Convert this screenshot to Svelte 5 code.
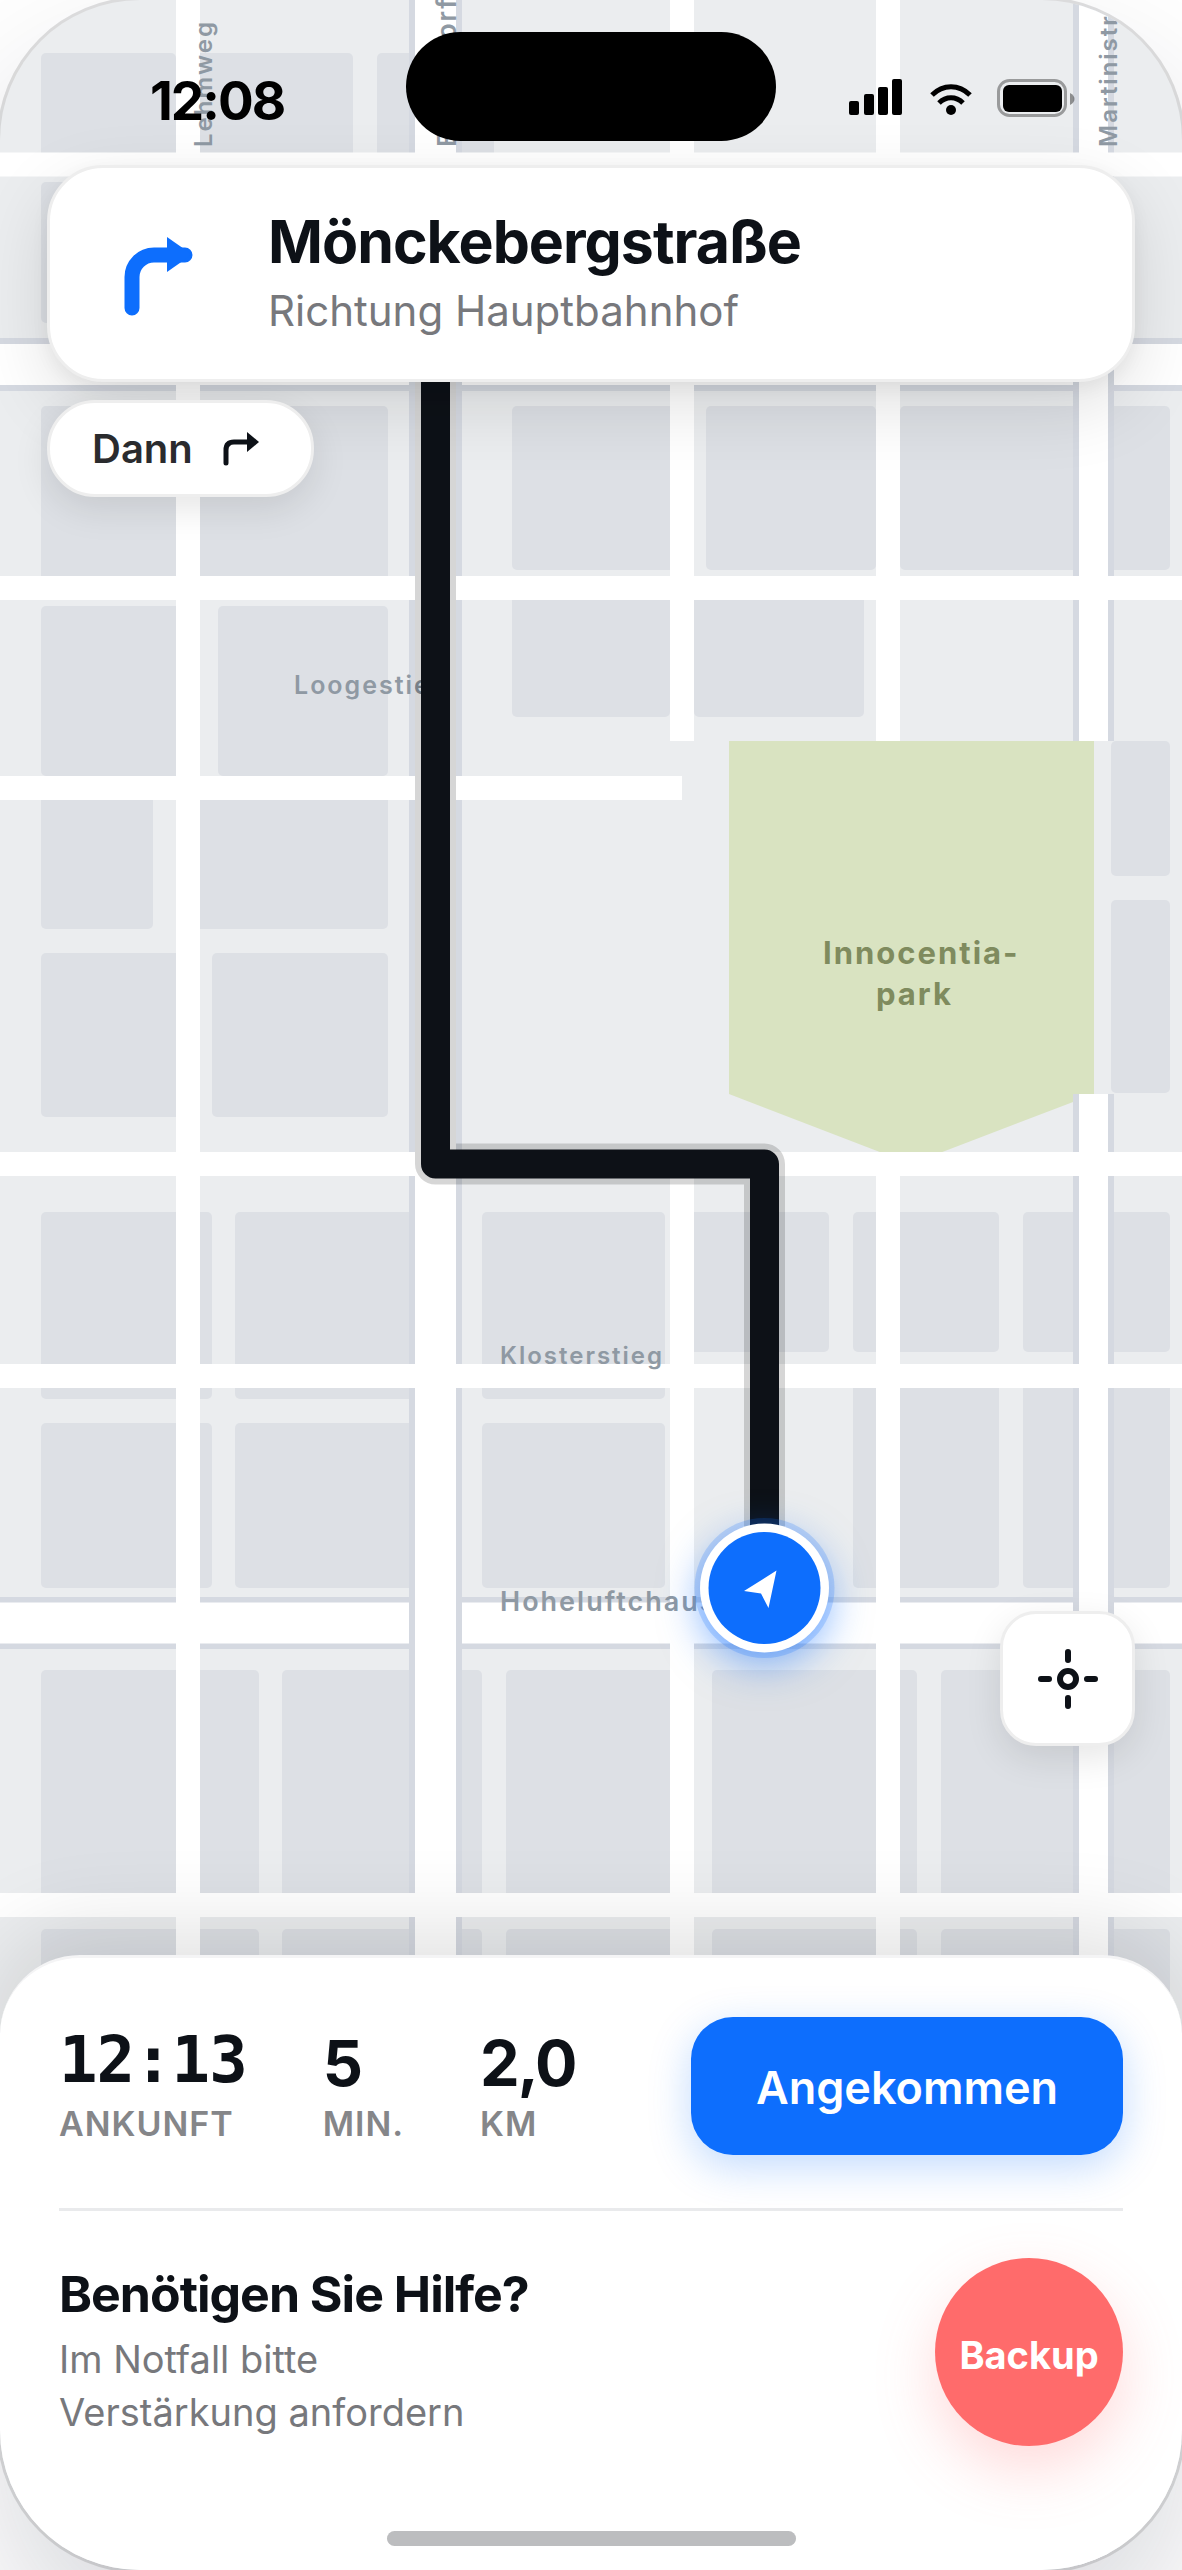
<script>
  const stats = [
    { value: '12:13', label: 'Ankunft', mono: true },
    { value: '5', label: 'Min.' },
    { value: '2,0', label: 'km' }
  ]

  // x, y, width, height
  const blocks = [
    [41, 53, 135, 110], [190, 53, 163, 110], [377, 53, 117, 110],
    [41, 182, 150, 141],
    [41, 406, 150, 180], [190, 406, 198, 180], [512, 406, 170, 164], [706, 406, 170, 164], [900, 406, 270, 164],
    [41, 606, 150, 170], [218, 606, 170, 170], [512, 590, 158, 127], [694, 590, 170, 127],
    [41, 776, 112, 153], [190, 776, 198, 153],
    [41, 953, 150, 164], [212, 953, 176, 164],
    [1111, 741, 59, 135], [1111, 900, 59, 193],
    [41, 1212, 171, 187], [235, 1212, 190, 187], [482, 1212, 183, 187],
    [680, 1212, 149, 140], [853, 1212, 146, 140], [1023, 1212, 147, 140],
    [41, 1423, 171, 165], [235, 1423, 190, 165], [482, 1423, 183, 165],
    [853, 1376, 146, 212], [1023, 1376, 147, 212],
    [41, 1670, 218, 235], [282, 1670, 200, 235], [506, 1670, 176, 235], [712, 1670, 205, 235], [941, 1670, 229, 235],
    [41, 1929, 218, 235], [282, 1929, 200, 235], [506, 1929, 176, 235], [712, 1929, 205, 235], [941, 1929, 229, 235]
  ]

  const mainRoads = [
    { d: 'M0 364.5H1182', width: 41, edge: 53 },
    { d: 'M0 1623H1182', width: 41, edge: 52 },
    { d: 'M435.5 0V2570', width: 41, edge: 53 },
    { d: 'M1093.5 0V741M1093.5 1094V2570', width: 29, edge: 41 }
  ]

  const sideRoads =
    'M0 164.5H1182M0 588H1182M0 788H682M0 1164H1182M0 1376H1182M0 1905H1182' +
    'M188 0V2570M682 0V741M682 1164V2570M888 0V741M888 1164V2570'

  const route = 'M435.5 300V1164H764.5V1588'
</script>

<main class="phone">
  <svg class="map" viewBox="0 0 1182 2570" preserveAspectRatio="xMidYMin slice" role="img" aria-label="Karte">
    {#each blocks as [x, y, width, height]}
      <rect class="block" {x} {y} {width} {height} rx="5" />
    {/each}

    <path class="park" d="M729 741H1094V1094L911 1164L729 1094Z" />

    {#each mainRoads as road}
      <path d={road.d} stroke="#d5d9e1" stroke-width={road.edge} />
      <path d={road.d} stroke="#fff" stroke-width={road.width} />
    {/each}
    <path d={sideRoads} stroke="#fff" stroke-width="24" />

    <g class="street">
      <text x="294" y="694" font-size="25">Loogestieg</text>
      <text x="500" y="1364" font-size="24">Klosterstieg</text>
      <text x="500" y="1611" font-size="27">Hoheluftchaussee</text>
      <text transform="translate(212 147) rotate(-90)" font-size="24">Lehmweg</text>
      <text transform="translate(456 147) rotate(-90)" font-size="26">Eppendorfer Baum</text>
      <text transform="translate(1117 147) rotate(-90)" font-size="24">Martinistraße</text>
    </g>
    <text class="park-name">
      <tspan x="823" y="964">Innocentia-</tspan>
      <tspan x="876" y="1005">park</tspan>
    </text>

    <path class="route-halo" d={route} />
    <path class="route" d={route} />

    <g class="marker">
      <circle class="glow" cx="764.5" cy="1588" r="70" />
      <circle class="rim" cx="764.5" cy="1588" r="64.5" />
      <circle cx="764.5" cy="1588" r="56" fill="#0d6efd" />
      <path d="M744 1591L776.500 1570.500L768.500 1608L761 1593.500Z" fill="#fff" />
    </g>
  </svg>

  <div class="status">
    <time class="clock">12:08</time>
    <div class="island"></div>
    <svg class="signals" viewBox="0 0 226 40" aria-hidden="true">
      <rect x="0" y="22" width="10" height="14" rx="2" />
      <rect x="15" y="15" width="10" height="21" rx="2" />
      <rect x="29" y="8" width="10" height="28" rx="2" />
      <rect x="43" y="0" width="10" height="36" rx="2" />
      <g fill="none" stroke="#000" stroke-width="5">
        <path d="M83 16C94 5 110 5 121 16" />
        <path d="M90 24C97 17 107 17 114 24" />
      </g>
      <circle cx="102" cy="31" r="5" />
      <rect x="149.500" y="1.500" width="67" height="35" rx="11" fill="none" stroke="#000" stroke-opacity="0.350" stroke-width="3" />
      <rect x="154" y="6" width="59" height="27" rx="6" />
      <path d="M221 14C227 17 227 23 221 26Z" fill-opacity="0.400" />
    </svg>
  </div>

  <section class="direction">
    <svg class="turn" viewBox="0 0 70 84" aria-hidden="true">
      <path d="M8 76V45A22 22 0 0 1 30 23H61" fill="none" stroke="#0d6efd" stroke-width="15" stroke-linecap="round" />
      <path d="M43 5L68 22.500L43 40Z" fill="#0d6efd" />
    </svg>
    <div>
      <h1>Mönckebergstraße</h1>
      <p class="towards">Richtung Hauptbahnhof</p>
    </div>
  </section>

  <div class="next">
    <span>Dann</span>
    <svg class="next-turn" viewBox="0 0 36 36" aria-hidden="true">
      <path d="M3 32V19Q3 11 11 11H28" fill="none" stroke="#0d1117" stroke-width="5" stroke-linecap="round" />
      <path d="M24 1L36 11L24 21Z" fill="#0d1117" />
    </svg>
  </div>

  <button class="locate" type="button" aria-label="Position zentrieren">
    <svg viewBox="0 0 60 60" aria-hidden="true">
      <circle cx="30" cy="30" r="8" />
      <path d="M30 3V11M30 49V57M3 30H11M49 30H57" />
    </svg>
  </button>

  <section class="sheet">
    <div class="trip">
      <dl class="stats">
        {#each stats as stat}
          <div class="stat">
            <dt>{stat.label}</dt>
            <dd class:mono={stat.mono}>{stat.value}</dd>
          </div>
        {/each}
      </dl>
      <button class="arrived" type="button">Angekommen</button>
    </div>

    <div class="help">
      <div>
        <h2>Benötigen Sie Hilfe?</h2>
        <p class="hint">Im Notfall bitte<br />Verstärkung anfordern</p>
      </div>
      <button class="backup" type="button">Backup</button>
    </div>

    <div class="home"></div>
  </section>
</main>

<style>
  :global(body) {
    margin: 0;
    background: #fff;
  }

  .phone {
    position: relative;
    display: flex;
    flex-direction: column;
    box-sizing: border-box;
    min-height: 100vh;
    overflow: hidden;
    border-radius: 140px;
    background: #ebedef;
    box-shadow:
      0 0 0 3px rgba(0, 0, 0, 0.12),
      0 72px 150px rgba(16, 24, 48, 0.17);
    font-family: Inter, 'Liberation Sans', sans-serif;
    color: #0d1117;
  }

  .map {
    position: absolute;
    inset: 0;
    width: 100%;
    height: 100%;
    fill: none;
  }

  .block {
    fill: #dde0e5;
  }

  .park {
    fill: #d9e3c1;
  }

  .street {
    fill: #8f99a3;
    font-weight: 600;
    letter-spacing: 2px;
  }

  .park-name {
    fill: #7f8b5e;
    font-size: 31px;
    font-weight: 700;
    letter-spacing: 2px;
  }

  .route,
  .route-halo {
    stroke: #0d1117;
    stroke-width: 29;
    stroke-linejoin: round;
  }

  .route-halo {
    stroke: #000;
    stroke-opacity: 0.16;
    stroke-width: 41;
  }

  .glow {
    fill: #0d6efd;
    fill-opacity: 0.2;
  }

  .rim {
    fill: #fff;
    filter: drop-shadow(0 12px 20px rgba(13, 110, 253, 0.5));
  }

  .status {
    position: relative;
    display: grid;
    grid-template-columns: 1fr 370px 1fr;
    align-items: center;
    height: 109px;
    padding: 32px 0 24px;
  }

  .clock {
    margin: 28px 0 0 150px;
    font-size: 53px;
    font-weight: 700;
    line-height: 52px;
    letter-spacing: -2px;
    color: #000;
  }

  .island {
    height: 109px;
    border-radius: 55px;
    background: #000;
  }

  .signals {
    width: 226px;
    height: 40px;
    margin: 25px 0 0 73px;
  }

  .direction {
    position: relative;
    display: flex;
    align-items: center;
    gap: 74px;
    box-sizing: border-box;
    min-height: 217px;
    margin: 0 47px;
    padding: 0 74px;
    border: 3px solid #eee;
    border-radius: 56px;
    background: #fff;
    box-shadow:
      0 6px 18px rgba(0, 0, 0, 0.05),
      0 24px 72px rgba(0, 0, 0, 0.12);
  }

  .turn {
    flex: none;
    width: 70px;
    height: 84px;
  }

  h1 {
    margin: 0 0 3px;
    font-size: 59px;
    font-weight: 700;
    line-height: 72px;
    letter-spacing: -1px;
  }

  .towards {
    margin: 0;
    font-size: 42px;
    line-height: 60px;
    color: #77787c;
  }

  .next {
    position: relative;
    display: flex;
    align-self: flex-start;
    align-items: center;
    gap: 30px;
    box-sizing: border-box;
    height: 97px;
    margin: 18px 47px 0;
    padding: 0 52px 0 42px;
    border: 3px solid #eee;
    border-radius: 48px;
    background: #fff;
    box-shadow: 0 12px 36px rgba(0, 0, 0, 0.1);
    font-size: 40px;
    font-weight: 600;
    color: #2a2b2e;
  }

  .next-turn {
    width: 36px;
    height: 36px;
  }

  button {
    border: 0;
    font-family: inherit;
    cursor: pointer;
  }

  .locate {
    position: relative;
    display: grid;
    place-items: center;
    box-sizing: border-box;
    width: 135px;
    height: 135px;
    margin: auto 47px 209px auto;
    padding: 0;
    border: 3px solid #eee;
    border-radius: 36px;
    background: #fff;
    box-shadow: 0 12px 36px rgba(0, 0, 0, 0.1);
  }

  .locate svg {
    width: 60px;
    height: 60px;
    fill: none;
    stroke: #0d1117;
    stroke-width: 6;
    stroke-linecap: round;
  }

  .sheet {
    position: relative;
    padding: 59px 59px 24px;
    border-top: 3px solid #f4f4f5;
    border-radius: 80px 80px 0 0;
    background: #fff;
    box-shadow: 0 -24px 90px rgba(0, 0, 0, 0.12);
  }

  .trip {
    display: flex;
    align-items: center;
    justify-content: space-between;
    padding-bottom: 53px;
    border-bottom: 3px solid #e9eaec;
  }

  .stats {
    display: flex;
    gap: 76px;
    margin: 0;
  }

  .stat {
    display: flex;
    flex-direction: column-reverse;
    gap: 18px;
  }

  dt {
    font-size: 34px;
    font-weight: 600;
    line-height: 34px;
    letter-spacing: 1px;
    text-transform: uppercase;
    color: #858689;
  }

  dd {
    margin: 0;
    font-size: 63px;
    font-weight: 700;
    line-height: 52px;
    letter-spacing: -2px;
  }

  .mono {
    font-family: 'DejaVu Sans Mono', monospace;
    font-size: 64px;
    line-height: 58px;
    letter-spacing: -1px;
  }

  .arrived {
    width: 432px;
    height: 138px;
    padding: 2px 0 0;
    border-radius: 42px;
    background: #0d6efd;
    box-shadow: 0 12px 42px rgba(13, 110, 253, 0.25);
    font-size: 45px;
    font-weight: 600;
    color: #fff;
  }

  .help {
    display: flex;
    align-items: center;
    justify-content: space-between;
    padding-top: 47px;
  }

  h2 {
    margin: 0 0 10px;
    font-size: 50px;
    font-weight: 700;
    line-height: 58px;
    letter-spacing: -1px;
  }

  .hint {
    margin: 0;
    font-size: 38px;
    line-height: 53px;
    color: #77787c;
  }

  .backup {
    width: 188px;
    height: 188px;
    padding: 6px 0 0;
    border-radius: 50%;
    background: #ff6b6b;
    box-shadow: 0 24px 60px rgba(255, 107, 107, 0.25);
    font-size: 38px;
    font-weight: 700;
    color: #fff;
  }

  .home {
    width: 409px;
    height: 15px;
    margin: 85px auto 0;
    border-radius: 8px;
    background: #bcbdbf;
  }
</style>
